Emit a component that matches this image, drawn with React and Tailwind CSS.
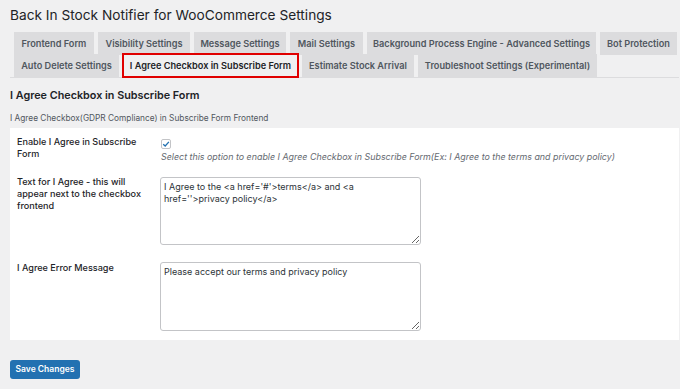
import React from 'react';

const row1 = [
  { label: 'Frontend Form', w: 'w-[80px]' },
  { label: 'Visibility Settings', w: 'w-[92px]' },
  { label: 'Message Settings', w: 'w-[92px]' },
  { label: 'Mail Settings', w: 'w-[73px]' },
  { label: 'Background Process Engine - Advanced Settings', w: 'w-[229px]' },
  { label: 'Bot Protection', w: 'w-[77px]' },
];

const row2 = [
  { label: 'Auto Delete Settings', w: 'w-[105px]' },
  { label: 'I Agree Checkbox in Subscribe Form', w: 'w-[175px]', active: true },
  { label: 'Estimate Stock Arrival', w: 'w-[112px]' },
  { label: 'Troubleshoot Settings (Experimental)', w: 'w-[179px]' },
];

const Tab = ({ label, w, active }) => (
  <div
    className={`${w} h-[23px] flex items-center justify-center text-[9.2px] font-semibold whitespace-nowrap ${
      active
        ? 'bg-[#f0f0f1] text-[#1d2327] outline-2 outline-[#e00000] -outline-offset-1'
        : 'bg-[#dcdcde] text-[#50575e]'
    }`}
  >
    {label}
  </div>
);

const App = () => {
  return (
    <div className="min-h-screen bg-[#f0f0f1] font-['Inter',sans-serif] pl-[10px] pr-[1px] pt-[5px] pb-[11px]">
      <h1 className="text-[13.7px] leading-[20px] text-[#1d2327]">Back In Stock Notifier for WooCommerce Settings</h1>

      <div className="mt-[7px] pl-[4px] border-b border-[#dcdcde]">
        <div className="flex gap-[4px]">
          {row1.map(t => <Tab key={t.label} {...t} />)}
        </div>
        <div className="flex gap-[4px] -mt-px">
          {row2.map(t => <Tab key={t.label} {...t} />)}
        </div>
      </div>

      <h2 className="mt-[11px] text-[10.8px] leading-[14px] font-semibold text-[#1d2327]">I Agree Checkbox in Subscribe Form</h2>
      <p className="mt-[9px] text-[8.3px] leading-[12px] text-[#50575e]">I Agree Checkbox(GDPR Compliance) in Subscribe Form Frontend</p>

      <div className="mt-[4px] bg-white pl-[7px] pt-[8px] pb-[9px]">
        {/* enable checkbox */}
        <div className="flex">
          <div className="w-[143px] pr-[8px] text-[9.1px] leading-[12px] font-medium text-[#1d2327]">Enable I Agree in Subscribe Form</div>
          <div className="pl-[1px]">
            <span className="mt-[3px] w-[10px] h-[10px] rounded-[2px] border border-[#c3c4c7] bg-white flex items-center justify-center">
              <svg viewBox="0 0 10 10" className="w-[8px] h-[8px]">
                <path d="M1.5 5.2 L4 7.5 L8.6 2.3" fill="none" stroke="#2271b1" strokeWidth="1.6" />
              </svg>
            </span>
            <p className="mt-[2px] text-[8.9px] leading-[12px] italic text-[#646970] whitespace-nowrap">
              Select this option to enable I Agree Checkbox in Subscribe Form(Ex: I Agree to the terms and privacy policy)
            </p>
          </div>
        </div>

        {/* agree text */}
        <div className="flex mt-[13px]">
          <div className="w-[143px] pr-[8px] text-[9.1px] leading-[12px] font-medium text-[#1d2327]">
            Text for I Agree - this will appear next to the checkbox frontend
          </div>
          <textarea
            readOnly
            defaultValue={"I Agree to the <a href='#'>terms</a> and <a href=''>privacy policy</a>"}
            className="mt-[1px] w-[261px] h-[68px] border border-[#c3c4c7] rounded-[3px] px-[3px] py-[3px] text-[9px] leading-[12px] text-[#2c3338] outline-none"
          />
        </div>

        {/* error message */}
        <div className="flex mt-[17px]">
          <div className="w-[143px] pr-[8px] text-[9.1px] leading-[12px] font-medium text-[#1d2327]">I Agree Error Message</div>
          <textarea
            readOnly
            defaultValue="Please accept our terms and privacy policy"
            className="w-[261px] h-[69px] border border-[#c3c4c7] rounded-[3px] px-[3px] py-[3px] text-[9px] leading-[12px] text-[#2c3338] outline-none"
          />
        </div>
      </div>

      <button className="mt-[20px] w-[70px] h-[19px] rounded-[3px] bg-[#2271b1] text-white text-[8.5px] font-semibold">
        Save Changes
      </button>
    </div>
  );
};

export default App;
